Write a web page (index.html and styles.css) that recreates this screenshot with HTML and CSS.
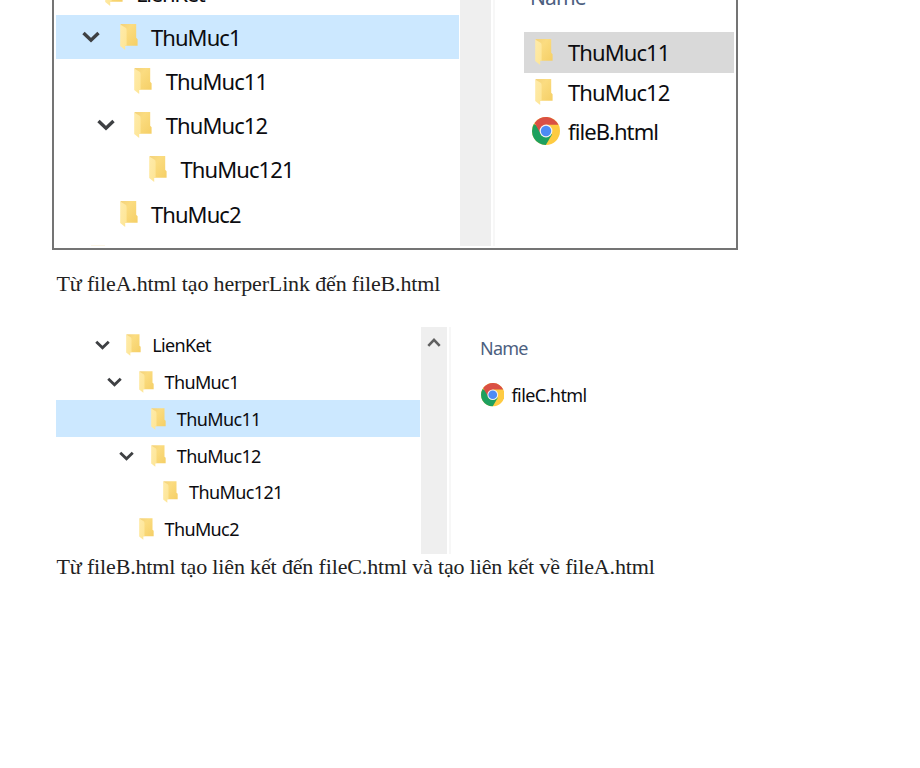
FILE: index.html
```
<!DOCTYPE html>
<html lang="vi">
<head>
<meta charset="utf-8">
<title>LienKet</title>
<link rel="stylesheet" href="styles.css">
</head>
<body>
<svg class="defs" width="0" height="0">
  <defs>
    <linearGradient id="back" x1="0" y1="0" x2="1" y2="1"><stop offset="0" stop-color="#f3d27c"/><stop offset=".35" stop-color="#fbdc80"/><stop offset="1" stop-color="#f5cf66"/></linearGradient>
    <linearGradient id="flap" x1="0" y1="0" x2="1" y2="1"><stop offset="0" stop-color="#ffebaa"/><stop offset="1" stop-color="#fde595"/></linearGradient>
    <symbol id="folder" viewBox="0 0 18 26"><path d="M.5 0H16.2V13.8L17.6 15.2V21.8H4Z" fill="url(#back)"/><path d="M.2.4L5.6 3.8Q6.6 4.4 6.6 6V21.8H5.2V26L.2 22Z" fill="url(#flap)"/></symbol>
    <symbol id="chevron" viewBox="0 0 18 12"><path d="M1.5 2L9 9.2L16.500 2" fill="none" stroke="#3e4043" stroke-width="3.400"/></symbol>
    <symbol id="chrome" viewBox="0 0 28 28"><circle cx="14" cy="14" r="14" fill="#fecb42"/><path d="M14 14L1.900 7A14 14 0 0 0 13.800 28L20 17.500Z" fill="#1da05f"/><path d="M14 14V7.800H26.500A14 14 0 0 0 2.600 5.900L8.500 16.500Z" fill="#da5044"/><circle cx="14" cy="14" r="6.400" fill="#f3f3f3"/><circle cx="14" cy="14" r="5.200" fill="#4c8bf5"/></symbol>
  </defs>
</svg>
<main>
  <section class="panel large">
    <div class="tree">
      <div class="row l0"><span class="toggle"></span><svg class="folder"><use href="#folder"/></svg><span class="label">LienKet</span></div>
      <div class="row l1 selected"><span class="toggle"><svg class="chevron"><use href="#chevron"/></svg></span><svg class="folder"><use href="#folder"/></svg><span class="label">ThuMuc1</span></div>
      <div class="row l2"><span class="toggle"></span><svg class="folder"><use href="#folder"/></svg><span class="label">ThuMuc11</span></div>
      <div class="row l2"><span class="toggle"><svg class="chevron"><use href="#chevron"/></svg></span><svg class="folder"><use href="#folder"/></svg><span class="label">ThuMuc12</span></div>
      <div class="row l3"><span class="toggle"></span><svg class="folder"><use href="#folder"/></svg><span class="label">ThuMuc121</span></div>
      <div class="row l1"><span class="toggle"></span><svg class="folder"><use href="#folder"/></svg><span class="label">ThuMuc2</span></div>
      <div class="next-item"></div>
    </div>
    <div class="scrollbar"></div>
    <div class="files">
      <div class="heading">Name</div>
      <div class="file active"><svg class="folder"><use href="#folder"/></svg><span class="label">ThuMuc11</span></div>
      <div class="file"><svg class="folder"><use href="#folder"/></svg><span class="label">ThuMuc12</span></div>
      <div class="file html"><svg class="chrome"><use href="#chrome"/></svg><span class="label">fileB.html</span></div>
    </div>
  </section>
  <p class="first">Từ fileA.html tạo herperLink đến fileB.html</p>
  <section class="panel small">
    <div class="tree">
      <div class="row l0"><span class="toggle"><svg class="chevron"><use href="#chevron"/></svg></span><svg class="folder"><use href="#folder"/></svg><span class="label">LienKet</span></div>
      <div class="row l1"><span class="toggle"><svg class="chevron"><use href="#chevron"/></svg></span><svg class="folder"><use href="#folder"/></svg><span class="label">ThuMuc1</span></div>
      <div class="row l2 selected"><span class="toggle"></span><svg class="folder"><use href="#folder"/></svg><span class="label">ThuMuc11</span></div>
      <div class="row l2"><span class="toggle"><svg class="chevron"><use href="#chevron"/></svg></span><svg class="folder"><use href="#folder"/></svg><span class="label">ThuMuc12</span></div>
      <div class="row l3"><span class="toggle"></span><svg class="folder"><use href="#folder"/></svg><span class="label">ThuMuc121</span></div>
      <div class="row l1"><span class="toggle"></span><svg class="folder"><use href="#folder"/></svg><span class="label">ThuMuc2</span></div>
    </div>
    <div class="scrollbar"><svg class="up" viewBox="0 0 14 10"><path d="M1.300 8.800L7 2.800L12.700 8.800" fill="none" stroke="#606060" stroke-width="2.600"/></svg></div>
    <div class="files">
      <div class="heading">Name</div>
      <div class="file html"><svg class="chrome"><use href="#chrome"/></svg><span class="label">fileC.html</span></div>
    </div>
  </section>
  <p class="second">Từ fileB.html tạo liên kết đến fileC.html và tạo liên kết về fileA.html</p>
</main>
</body>
</html>
```
FILE: styles.css
```
* { box-sizing: border-box; }
body { margin: 0; background: #fff; overflow: hidden; }
.defs { display: block; }
main { height: 768px; overflow: hidden; }
.panel { display: flex; font-family: "Noto Sans", "Open Sans", sans-serif; color: #0c0c10; white-space: nowrap; overflow: hidden; }
.panel svg { flex: none; display: block; }
.row, .file { display: flex; align-items: center; }
.row { height: var(--row); padding-left: calc(var(--start) + var(--level) * var(--step)); }
.l0 { --level: 0; }
.l1 { --level: 1; }
.l2 { --level: 2; }
.l3 { --level: 3; }
.toggle { flex: none; width: var(--toggle); }
.selected { background: #cce8ff; }
.scrollbar { background: #efefef; flex: none; }
.files { border-left: 2px solid #f7f7f7; }
.heading { color: #4c607f; }

.large { --row: 44.2px; --start: 11.300px; --step: 14.800px; --toggle: 37.500px; width: 686px; height: 250px; margin-left: 52px; border: 2px solid #747474; border-top: 0; font-size: 22px; letter-spacing: -.9px; line-height: 30px; }
.large .tree { flex: none; width: 405px; margin: -29.400px 1px 0 0; padding-left: 2px; }
.large .chevron { width: 18px; height: 12px; }
.large .folder { width: 18px; height: 26px; margin-right: 13.300px; }
.large .l0 .label { letter-spacing: -1.250px; }
.large .scrollbar { width: 31px; height: 246px; margin-right: 2px; }
.large .files { flex: none; width: 241px; height: 246px; padding-left: 29px; }
.large .heading { height: 50px; margin: -18px 0 0 6px; font-size: 21px; }
.large .file { height: 39.300px; padding-left: 11.300px; }
.large .file .folder { margin-right: 14.700px; }
.large .active { height: 40.500px; background: #d9d9d9; }
.large .file.html { height: 38px; padding-left: 8px; }
.large .chrome { width: 28px; height: 28px; margin-right: 8px; }
.next-item { width: 14px; height: 1px; margin: 9px 0 0 35px; background: #fcf6e8; }

.small { --row: 36.850px; --start: 38.700px; --step: 12.300px; --toggle: 31.500px; height: 227.300px; margin-left: 56px; font-size: 18px; letter-spacing: -.62px; line-height: 26px; }
.small .tree { flex: none; width: 365px; padding-right: 1px; }
.small .chevron { width: 15px; height: 10px; }
.small .folder { width: 15px; height: 22px; margin-right: 11px; }
.small .scrollbar { width: 26px; margin-right: 2px; }
.small .up { width: 14px; height: 10px; margin: 10px 0 0 6px; }
.small .files { width: 180px; padding: 8.500px 0 0 29px; }
.small .heading { height: 41.700px; letter-spacing: -.75px; }
.small .html { height: 36px; padding-left: .5px; }
.small .chrome { width: 23.500px; height: 23.500px; margin-right: 7.500px; }
.small .html .label { letter-spacing: -.58px; }

p { margin: 0 0 0 56.500px; font: 22px/26px "Liberation Serif", "Times New Roman", serif; letter-spacing: -.15px; color: #222; white-space: nowrap; }
.first { padding-top: 21px; height: 76.700px; }
```
